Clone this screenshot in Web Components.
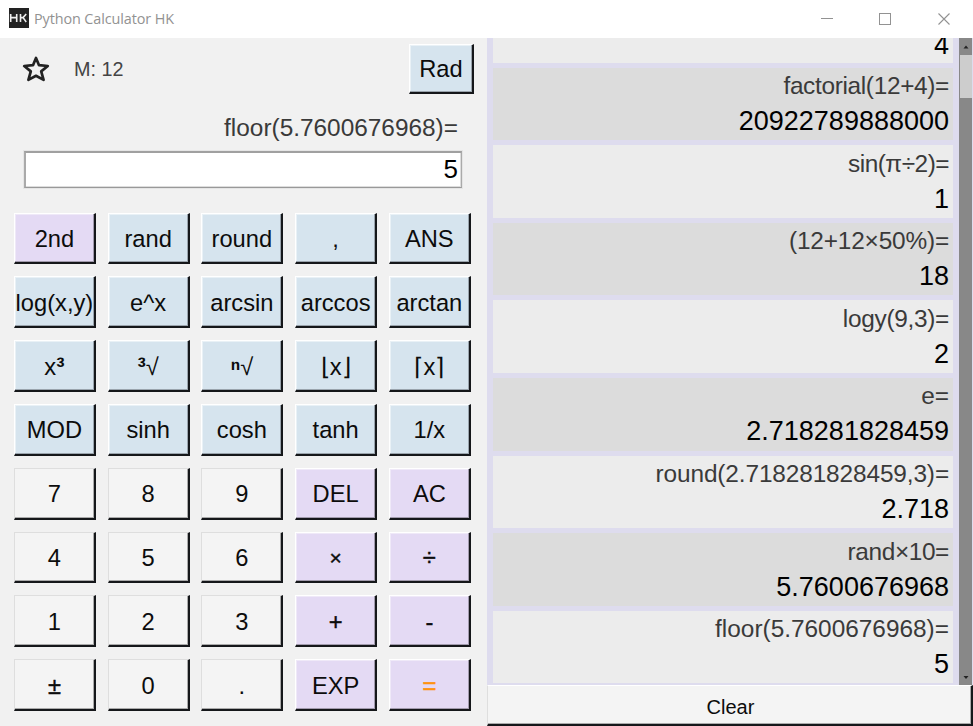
<!DOCTYPE html>
<html lang="en">
<head>
<meta charset="utf-8">
<title>Python Calculator HK</title>
<style>
html,body{margin:0;height:100%;overflow:hidden;background:#f1f1f1}
body{font-family:"Liberation Sans",Arial,sans-serif;color:#0c0c0c}
</style>
</head>
<body>
<calc-app></calc-app>
<script>
class Base extends HTMLElement {
  constructor() {
    super();
    this.attachShadow({ mode: "open" }).innerHTML = this.constructor.markup;
  }
}

customElements.define("title-bar", class extends Base {
  static markup = `<style>
    :host{display:flex;box-sizing:border-box;height:38px;background:#fff;align-items:center;padding:0 22px 0 9px}
    .logo{width:20px;height:20px;flex:none;margin-top:-2px}
    .name{font:14.4px/20px "Open Sans","Noto Sans",sans-serif;color:#929292;margin-left:5px;flex:1;white-space:nowrap;letter-spacing:-.1px}
    .controls{display:flex;gap:44px}
    svg{display:block}
    </style>
    <svg class="logo" viewBox="0 0 20 20"><rect width="20" height="20" fill="#222"/><path d="M1.7 6v8M7.7 6v8M1.7 9.6h6M11.5 6v8M17.2 6l-3.1 3.6h-2.6M14.1 9.6l3.1 4.4" fill="none" stroke="#eee" stroke-width="1.6"/></svg>
    <span class="name"><slot></slot></span>
    <div class="controls">
      <svg width="14" height="14" viewBox="0 0 14 14"><path d="M1 6.5h12" stroke="#929292"/></svg>
      <svg width="14" height="14" viewBox="0 0 14 14"><rect x="1.5" y="1.5" width="11" height="11" fill="none" stroke="#929292"/></svg>
      <svg width="14" height="14" viewBox="0 0 14 14" style="margin-left:1px"><path d="M1.5 1.5l11 11M12.5 1.5l-11 11" stroke="#929292" stroke-width="1.1"/></svg>
    </div>`;
});

customElements.define("calc-key", class extends Base {
  static markup = `<style>
    :host{display:flex;box-sizing:border-box;align-items:center;justify-content:center;background:#d6e4ee;
      border:1px solid;border-color:#fff #15171a #15171a #fff;border-right-width:2px;border-bottom-width:2px;
      box-shadow:inset -1px -1px #9aa4ad,inset 1px 1px #e9f1f6;font-size:23.7px;line-height:28px;padding-top:2px;white-space:nowrap;min-width:0}
    :host([tone=violet]){background:#e4daf4;box-shadow:inset -1px -1px #a29bad,inset 1px 1px #efe9f8}
    :host([tone=plain]){background:#f4f4f4;border-top-color:#dedede;border-left-color:#dedede;box-shadow:inset -1px -1px #aaa}
    :host([accent]){color:#ff930f;-webkit-text-stroke:.7px #ff930f}
    :host([heavy]){-webkit-text-stroke:.4px #0c0c0c}
    :host([small]){font-size:21px}
    ::slotted(b){font-weight:700;font-size:25px}
    </style><slot></slot>`;
});

customElements.define("status-row", class extends Base {
  static markup = `<style>
    :host{display:flex;align-items:center;height:62px;padding:0 13px 0 22px}
    .mem{font-size:19.8px;color:#444;margin-left:24px;flex:1}
    calc-key{width:65px;height:50px;margin-top:-1px}
    svg{flex:none}
    </style>
    <svg width="28" height="28" viewBox="0 0 28 28"><path d="M14 2.9L17 10.2L25.8 11L19.2 16.4L21.6 24.9L14 20.8L6.4 24.9L8.8 16.4L2.2 11L11 10.2Z" fill="none" stroke="#222" stroke-width="2.7" stroke-linejoin="round"/></svg>
    <span class="mem"><slot></slot></span><calc-key>Rad</calc-key>`;
});

customElements.define("calc-display", class extends Base {
  static markup = `<style>
    :host{display:block;padding:0 25px 0 24px}
    .expr{height:51px;box-sizing:border-box;padding:14px 4px 0 0;text-align:right;font-size:24.4px;line-height:28px;color:#3a3a3a}
    .value{box-sizing:border-box;height:37px;background:#fff;border:2px solid #a0a0a0;border-left-color:#aaa;border-right:1px solid #aaa;border-bottom:1px solid #999;
      box-shadow:inset -1px -1px #ddd;outline:1px solid #e5e5e5;text-align:right;padding-right:3px;font-size:26px;line-height:33px;color:#000}
    </style><div class="expr"><slot name="expression"></slot></div><div class="value"><slot></slot></div>`;
});

customElements.define("key-pad", class extends Base {
  static markup = `<style>
    :host{display:grid;box-sizing:border-box;grid-template-columns:repeat(5,81.8px);grid-template-rows:repeat(8,51.8px);
      column-gap:11.95px;row-gap:12px;padding:24.7px 0 0 14px}
    </style><slot></slot>`;
});

customElements.define("history-entry", class extends Base {
  static markup = `<style>
    :host{display:block;box-sizing:border-box;flex:none;height:72.6px;background:#ececec;text-align:right;padding:4.5px 4px 0 0}
    :host([shaded]){background:#dcdcdc}
    .e{font-size:24.4px;line-height:28px;color:#3a3a3a}
    .v{font-size:27px;line-height:30px;color:#000;margin-top:6px}
    :host([clipped]) .e{display:none}
    </style><div class="e"><slot name="e"></slot></div><div class="v"><slot></slot></div>`;
});

customElements.define("history-list", class extends Base {
  static markup = `<style>
    :host{display:flex;height:647px;background:#dedcee;overflow:hidden}
    .items{flex:1;display:flex;flex-direction:column;justify-content:flex-end;gap:5px;padding:0 6px 1.7px 6px;overflow:hidden;min-width:0}
    .bar{width:13px;background:#888;display:flex;flex-direction:column;align-items:center;margin-right:1px}
    .thumb{width:12px;height:43px;background:#cdcdcd;margin:0 0 auto 1px}
    svg{display:block;flex:none}
    </style>
    <div class="items"><slot></slot></div>
    <div class="bar"><svg width="13" height="17"><path d="M4.5 10.5h5L7 7.5z" fill="#222"/></svg><div class="thumb"></div>
    <svg width="13" height="17"><path d="M4.5 8h5L7 11z" fill="#222"/></svg></div>`;
});

customElements.define("calc-app", class extends HTMLElement {
  connectedCallback() {
    const blue = ["rand","round",",","ANS","log(x,y)","e^x","arcsin","arccos","arctan","x<b>³</b>","<b>³</b>√","<b>ⁿ</b>√","⌊x⌋","⌈x⌉","MOD","sinh","cosh","tanh","1/x"];
    const key = (t, tone = "", extra = "") => `<calc-key tone="${tone}" ${extra}>${t}</calc-key>`;
    const flags = { "=": "accent", "±": "heavy", "+": "heavy", "-": "heavy", "÷": "heavy", "×": "heavy small" };
    const digits = [["7","8","9","DEL","AC"],["4","5","6","×","÷"],["1","2","3","+","-"],["±","0",".","EXP","="]];
    const keys = key("2nd", "violet") + blue.map(t => key(t)).join("") +
      digits.map(r => r.map((t, i) => key(t, i < 3 ? "plain" : "violet", flags[t] || "")).join("")).join("");
    // Expression, result, letter spacing of the expression in px.
    const log = [["","4",0],["factorial(12+4)=","20922789888000",-.33],["sin(π÷2)=","1",-.5],["(12+12×50%)=","18",-.17],["logy(9,3)=","2",-.3],
      ["e=","2.718281828459",0],["round(2.718281828459,3)=","2.718",-.12],["rand×10=","5.7600676968",-.38],["floor(5.7600676968)=","5",0]];
    // The oldest entry is scrolled so that only its result line shows.
    const entries = log.map(([e, v, s], i) =>
      `<history-entry ${i % 2 ? "shaded" : ""} ${i ? "" : "clipped"}>${i ? `<span slot="e" style="letter-spacing:${s}px">${e}</span>` : ""}${v}</history-entry>`).join("");
    this.attachShadow({ mode: "open" }).innerHTML = `<style>
      :host{display:block;width:973px;height:726px;background:#f1f1f1}
      main{display:grid;grid-template-columns:487px 486px;height:688px}
      .left{min-width:0}
      .right{display:flex;flex-direction:column;min-width:0}
      .clear{flex:1;font-size:20px;padding:3px 0 0 2px;border-top-color:#fff}
      history-entry[clipped]{padding-top:34px}
      </style>
      <title-bar>Python Calculator HK</title-bar>
      <main><section class="left"><status-row>M: 12</status-row>
      <calc-display><span slot="expression">floor(5.7600676968)=</span>5</calc-display>
      <key-pad>${keys}</key-pad></section>
      <section class="right"><history-list>${entries}</history-list><calc-key class="clear" tone="plain">Clear</calc-key></section></main>`;
  }
});
</script>
</body>
</html>
